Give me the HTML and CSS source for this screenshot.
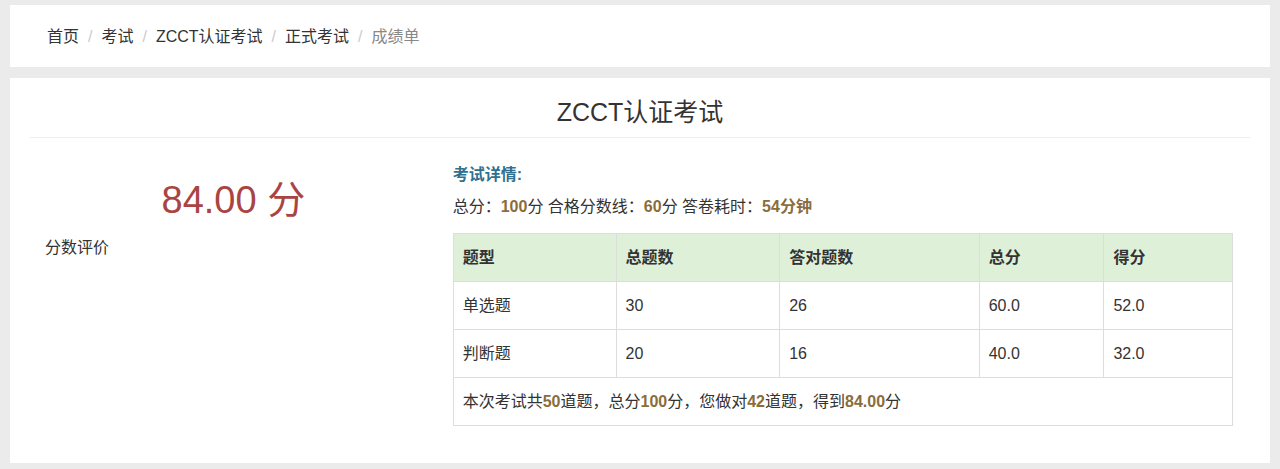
FILE: index.html
```html
<!DOCTYPE html>
<html lang="zh-CN">
<head>
<meta charset="utf-8">
<title>成绩单</title>
<link rel="stylesheet" href="styles.css">
</head>
<body>
<div class="card crumb-card">
  <ol class="breadcrumb">
    <li><a href="#">首页</a></li>
    <li><a href="#">考试</a></li>
    <li><a href="#">ZCCT认证考试</a></li>
    <li><a href="#">正式考试</a></li>
    <li class="active">成绩单</li>
  </ol>
</div>
<div class="card main-card">
  <div class="main-head">
    <h1 class="title">ZCCT认证考试</h1>
  </div>
  <div class="main-body">
    <div class="col-left">
      <div class="score">84.00 分</div>
      <div class="score-eval">分数评价</div>
    </div>
    <div class="col-right">
      <div class="detail-title">考试详情:</div>
      <div class="detail-line">总分：<b>100</b>分 合格分数线：<b>60</b>分 答卷耗时：<b>54分钟</b></div>
      <table class="result">
        <colgroup>
          <col class="c1"><col class="c2"><col class="c3"><col class="c4"><col class="c5">
        </colgroup>
        <thead>
          <tr><th>题型</th><th>总题数</th><th>答对题数</th><th>总分</th><th>得分</th></tr>
        </thead>
        <tbody>
          <tr><td>单选题</td><td>30</td><td>26</td><td>60.0</td><td>52.0</td></tr>
          <tr><td>判断题</td><td>20</td><td>16</td><td>40.0</td><td>32.0</td></tr>
          <tr><td colspan="5">本次考试共<b>50</b>道题，总分<b>100</b>分，您做对<b>42</b>道题，得到<b>84.00</b>分</td></tr>
        </tbody>
      </table>
    </div>
  </div>
</div>
</body>
</html>
```

FILE: styles.css
```css
html, body {
  margin: 0;
  padding: 0;
}
body {
  background: #ebebeb;
  padding: 5px 10px 0;
  font-family: "Liberation Sans", Arial, "Noto Sans CJK SC", sans-serif;
  font-size: 16px;
  color: #333;
}
.card {
  background: #fff;
}
.crumb-card {
  height: 62px;
  display: flex;
  align-items: center;
  padding: 0 37px;
  box-sizing: border-box;
}
.breadcrumb {
  list-style: none;
  margin: 0;
  padding: 0;
  display: flex;
  font-size: 16px;
  line-height: 23px;
}
.breadcrumb li a {
  color: #333;
  text-decoration: none;
}
.breadcrumb li + li::before {
  content: "/";
  color: #ccc;
  padding: 0 9px;
}
.breadcrumb li.active {
  color: #888;
}
.main-card {
  margin-top: 11px;
  padding: 0 20px 37px;
}
.main-head {
  border-bottom: 1px solid #eee;
  padding: 16px 0 7px;
}
.title {
  margin: 0;
  text-align: center;
  font-size: 25px;
  font-weight: normal;
  line-height: 36px;
  color: #333;
}
.main-body {
  display: grid;
  grid-template-columns: 1fr 2fr;
  padding-top: 25px;
}
.col-left {
  padding: 0 15px;
}
.col-right {
  padding: 0 17px 0 16px;
}
.score {
  margin-top: 16px;
  text-align: center;
  font-size: 38px;
  line-height: 42px;
  color: #a94442;
}
.score-eval {
  margin-top: 15px;
  line-height: 23px;
}
.detail-title {
  color: #31708f;
  font-weight: bold;
  line-height: 23px;
  margin-bottom: 9px;
}
.detail-line {
  line-height: 23px;
  margin-bottom: 15px;
}
.detail-line b, .result b {
  color: #8a6d3b;
}
.result {
  width: 100%;
  border-collapse: collapse;
  table-layout: fixed;
}
.result .c1 { width: 20.9%; }
.result .c2 { width: 21%; }
.result .c3 { width: 25.6%; }
.result .c4 { width: 16%; }
.result .c5 { width: 16.5%; }
.result th, .result td {
  border: 1px solid #ddd;
  padding: 12px 9px;
  line-height: 23px;
  text-align: left;
}
.result th {
  background: #dff0d8;
  font-weight: bold;
  color: #333;
}
```
